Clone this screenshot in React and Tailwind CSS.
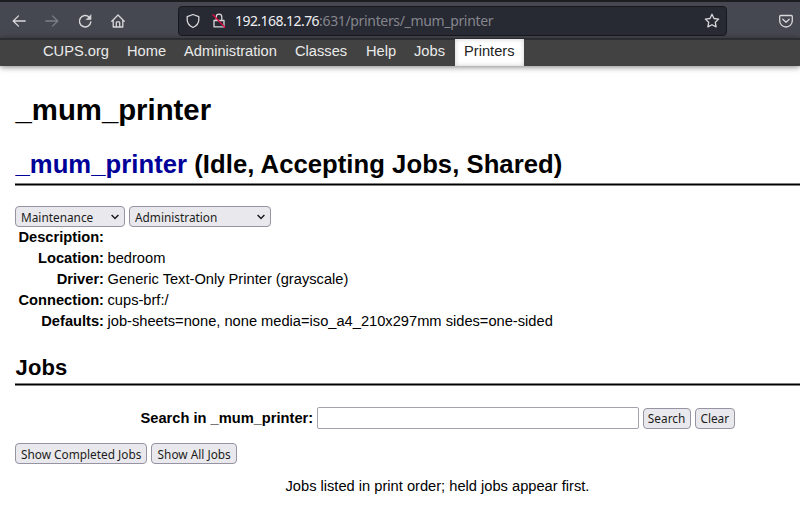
import React from "react";

const NAV = [
  ["CUPS.org", "w-[84px]"],
  ["Home", "w-[57px]"],
  ["Administration", "w-[111px]"],
  ["Classes", "w-[71px]"],
  ["Help", "w-[48px]"],
  ["Jobs", "w-[49px]"],
];

const DETAILS = [
  ["Description:", ""],
  ["Location:", "bedroom"],
  ["Driver:", "Generic Text-Only Printer (grayscale)"],
  ["Connection:", "cups-brf:/"],
  ["Defaults:", "job-sheets=none, none media=iso_a4_210x297mm sides=one-sided"],
];

function Icon({ children, className = "" }) {
  return (
    <svg
      viewBox="0 0 16 16"
      className={"h-4 w-4 shrink-0 " + className}
      fill="none"
      stroke="currentColor"
      strokeWidth="1.3"
      strokeLinecap="round"
      strokeLinejoin="round"
    >
      {children}
    </svg>
  );
}

function Toolbar() {
  return (
    <div className="flex h-[38px] items-center border-t-2 border-[#1c1d21] bg-[#454850] pt-px text-[#d8d8da]">
      <Icon className="ml-[11px]">
        <path d="M14.200 8H2.200M7.500 2.900 2.200 8l5.300 5.100" />
      </Icon>
      <Icon className="ml-[17px] text-[#7d7f85]">
        <path d="M1.800 8h12M8.500 2.900 13.800 8l-5.300 5.100" />
      </Icon>
      <Icon className="ml-[17px]">
        <path d="M12.200 4.200A5.700 5.700 0 1 0 13.800 9" strokeWidth="1.5" />
        <path d="M14 2v4.600H9.400z" fill="currentColor" strokeWidth="0.6" />
      </Icon>
      <Icon className="ml-[17px]">
        <path d="M1.800 8.200 8 2l6.200 6.200M3.200 7.300v6.700h9.600V7.300M6.300 13.800V9.600q0-.8.8-.8h1.800q.8 0 .8.8v4.200" />
      </Icon>
      <div className="ml-[52px] flex h-[30px] w-[549px] items-center rounded border border-[#17181e] bg-[#272933]">
        <Icon className="ml-[6px]">
          <path d="M8 1.500 13.800 3.600v3.200c0 3.400-2.200 6-5.800 7.700-3.600-1.700-5.800-4.300-5.800-7.700V3.600z" />
        </Icon>
        <Icon className="ml-[10px]">
          <path d="M5.200 7.500V4a2.800 2.800 0 0 1 5.600 0v3.500M3 7.500h10v6.300H3z" />
          <path d="m2 1.800 11.800 12.400" stroke="#d70b40" strokeWidth="1.4" />
        </Icon>
        <div className="ml-[8px] whitespace-pre font-['Noto_Sans',sans-serif] text-[14px] leading-[20px] text-[#85868c]">
          <span className="tracking-[-0.56px] text-[#efeff1]">192.168.12.76</span>
          <span className="tracking-[-0.34px]">:631/printers/_mum_printer</span>
        </div>
        <Icon className="ml-auto mr-[6px]">
          <path d="m8 1.300 2 4.200 4.700.6-3.400 3.200.8 4.600L8 11.700l-4.100 2.200.8-4.600L1.300 6.100 6 5.500z" />
        </Icon>
      </div>
      <Icon className="ml-[51px]">
        <path d="M2.700 2.500h10.600q1 0 1 1v4.200a6.300 6.300 0 0 1-12.600 0V3.500q0-1 1-1z" />
        <path d="M4.800 6.300 8 9.300l3.200-3" />
      </Icon>
    </div>
  );
}

const CONTROL =
  "flex h-[21px] shrink-0 items-center whitespace-nowrap rounded-[4px] border border-[#9693a3] bg-[#e9e9ed] font-['Noto_Sans',sans-serif] text-[13px] leading-[18px] text-[#1c1c20] ";

function Button({ className, children }) {
  return (
    <button className={CONTROL + "justify-center " + className}>
      <span className="inline-block shrink-0 scale-x-[0.91]">{children}</span>
    </button>
  );
}

function Select({ className, children }) {
  return (
    <div className={CONTROL + "justify-between pl-[5px] pr-[5px] " + className}>
      <span className="inline-block origin-left scale-x-[0.91]">{children}</span>
      <svg viewBox="0 0 8 6" className="h-[6px] w-[8px] shrink-0" fill="none" stroke="currentColor" strokeWidth="1.5">
        <path d="M.6 1 4 4.500 7.400 1" />
      </svg>
    </div>
  );
}

function Rule() {
  return <div className="h-[3px] border-y border-[#808080] bg-black" />;
}

export default function App() {
  return (
    <div className="h-[522px] w-[800px] overflow-hidden bg-white font-['Liberation_Sans',Arial,sans-serif] text-[14.667px] leading-[21px] text-black">
      <Toolbar />
      <div className="flex h-[28px] border-t-2 border-[#2b2d31] bg-[#424242] pl-[43px] text-[#eaeaea] shadow-[0_1px_6px_rgba(0,0,0,0.5)]">
        {NAV.map(([label, width]) => (
          <a key={label} className={"shrink-0 whitespace-nowrap pt-px " + width}>
            {label}
          </a>
        ))}
        <a className="-ml-[8px] -mt-px h-[27px] w-[69px] shrink-0 bg-white pl-[9px] pt-[2px] text-[#222] shadow-[inset_0_0_5px_rgba(0,0,0,0.2)]">
          Printers
        </a>
      </div>
      <main className="pl-[15px]">
        <h1 className="mt-[26px] pl-[0.5px] text-[29.333px] font-bold leading-[36px]">_mum_printer</h1>
        <h2 className="mt-[20px] pl-[0.5px] text-[25.667px] font-bold leading-[32px] tracking-[0.04px]">
          <a className="text-[#000099]">_mum_printer</a> (Idle, Accepting Jobs, Shared)
        </h2>
        <div className="mt-[3px]">
          <Rule />
        </div>
        <div className="mt-[20px] flex gap-[4px]">
          <Select className="w-[110px]">Maintenance</Select>
          <Select className="w-[142px]">Administration</Select>
        </div>
        <dl className="pl-[0.5px]">
          {DETAILS.map(([term, value]) => (
            <div key={term} className="flex h-[21px] gap-[3.5px]">
              <dt className="w-[88.5px] whitespace-nowrap text-right font-bold">{term}</dt>
              <dd className="whitespace-nowrap">{value}</dd>
            </div>
          ))}
        </dl>
        <h3 className="mt-[22px] pl-[0.5px] text-[22px] font-bold leading-[28px] tracking-[0.15px]">Jobs</h3>
        <div className="mt-px">
          <Rule />
        </div>
        <form className="mt-[21px] flex items-center pl-[125.5px]">
          <label className="w-[176.5px] shrink-0 whitespace-nowrap font-bold">Search in _mum_printer:</label>
          <input className="h-[22px] w-[322px] rounded-[2px] border border-[#a5a4ae] bg-white" />
          <Button className="ml-[4px] w-[48px]">Search</Button>
          <Button className="ml-[4px] w-[40px]">Clear</Button>
        </form>
        <div className="mt-[14px] flex gap-[4px]">
          <Button className="w-[132px]">Show Completed Jobs</Button>
          <Button className="w-[86px]">Show All Jobs</Button>
        </div>
        <p className="mt-[12px] pl-[270.5px]">Jobs listed in print order; held jobs appear first.</p>
      </main>
    </div>
  );
}
